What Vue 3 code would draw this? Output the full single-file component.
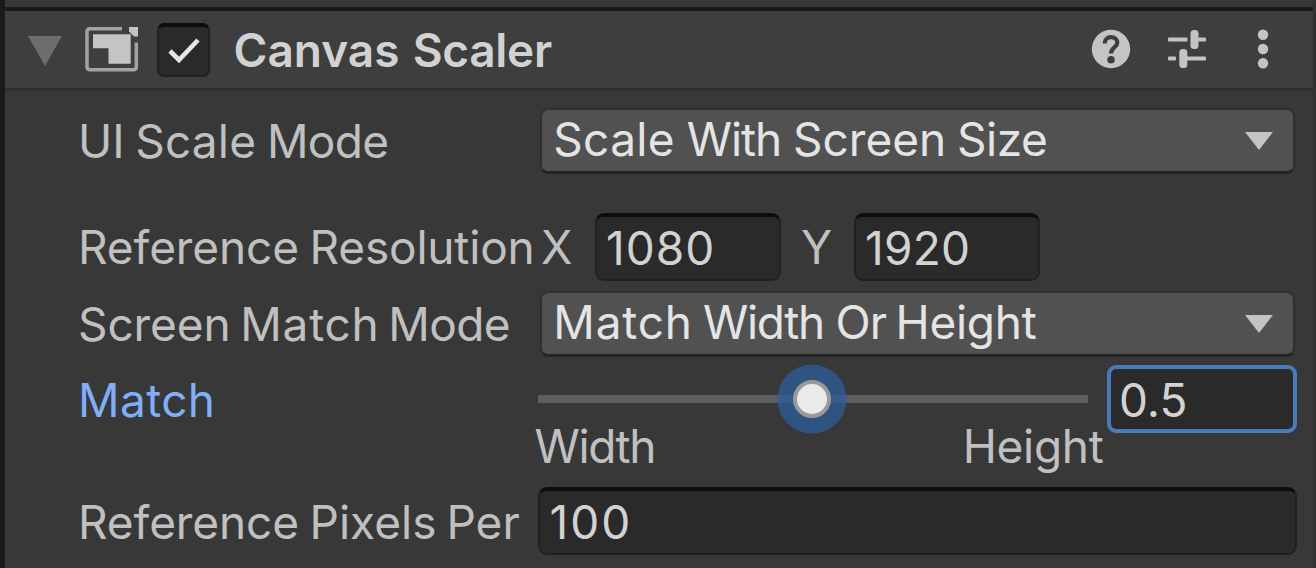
<script setup>
import { ref, h } from 'vue'

// Each word is [text, tracking, space before it], in pixels.
const Words = ({ words }) =>
  h('span', { class: 'words' }, words.map(([text, tracking = 0, gap = 0], i) =>
    h('span', { style: { letterSpacing: tracking + 'px', marginLeft: gap + 'px' } }, i ? ' ' + text : text)))
Words.props = ['words']

const text = {
  title: [['Canvas', 0], ['Scaler', -0.3, 13.2]],
  scaleMode: [['UI', 0], ['Scale', 0.2, 10.6], ['Mode', -0.7, 10.8]],
  scaleValue: [['Scale', 0.3], ['With', -1.1, 11.9], ['Screen', 0, 12], ['Size', -0.5, 10.8]],
  resolution: [['Reference', -0.1], ['Resolution', -0.2, 10.6]],
  matchMode: [['Screen', -0.1], ['Match', 0.7, 9.8], ['Mode', -0.6, 9]],
  matchValue: [['Match', 0.8], ['Width', -1.3, 10.2], ['Or', -1, 11.6], ['Height', -0.3, 9.5]],
  match: [['Match', 0.4]],
  low: [['Width', -1.4]],
  high: [['Height', -0.3]],
  pixels: [['Reference', -0.1], ['Pixels', 0, 10.6], ['Per', 0, 10]],
}

const enabled = ref(true)
const resolution = ref([
  { axis: 'X', value: '1080', tracking: 1 },
  { axis: 'Y', value: '1920', tracking: 0.2 },
])
const match = ref(0.5)
</script>

<template>
  <main class="panel">
    <div class="strip"></div>
    <header class="head">
      <svg class="fold" width="36" height="32" viewBox="0 0 36 32"><path d="M1 1H35L18 31Z" fill="#6d6d6d" /></svg>
      <svg class="comp" width="56" height="50" viewBox="0 0 56 50">
        <path d="M38 4.700H6Q3 4.700 3 7.700V42.700Q3 45.700 6 45.700H49.300Q52.300 45.700 52.300 42.700V18.500" fill="none" stroke="#a3a3a3" stroke-width="3.500" />
        <path d="M9 10.300H46.700V39.700H24.500V24.300H9Z" fill="#c4c4c4" />
        <path d="M45 3H54V12.500H50L45 7.500Z" fill="#c4c4c4" />
      </svg>
      <div class="check">
        <svg v-if="enabled" width="36" height="30" viewBox="0 0 36 30"><path d="M4 15L13 24L32 4" fill="none" stroke="#e6e6e6" stroke-width="4.600" /></svg>
      </div>
      <h1 class="title"><Words :words="text.title" /></h1>
      <div class="tools">
        <svg width="40" height="40" viewBox="0 0 40 40">
          <circle cx="20" cy="20" r="19.200" fill="#c4c4c4" />
          <path d="M13.700 14.500C13.700 10.700 16.300 8.200 20 8.200C23.800 8.200 26.300 10.500 26.300 13.700C26.300 18.200 20 18.500 20 24.500" fill="none" stroke="#3e3e3e" stroke-width="4.200" />
          <circle cx="20" cy="30.800" r="3.800" fill="#3e3e3e" />
        </svg>
        <svg width="40" height="40" viewBox="0 0 40 40" fill="#c4c4c4">
          <rect x="1" y="8.500" width="19.500" height="4" rx="1" />
          <rect x="31" y="8.500" width="8" height="4" rx="1" />
          <rect x="23.500" y="1" width="8" height="19" rx="3.500" />
          <rect x="1" y="27.500" width="8" height="4" rx="1" />
          <rect x="19" y="27.500" width="20" height="4" rx="1" />
          <rect x="12.300" y="20" width="8" height="19" rx="3.500" />
        </svg>
        <svg class="dots" width="12" height="40" viewBox="0 0 12 40" fill="#c4c4c4">
          <circle cx="6" cy="5.800" r="5.200" /><circle cx="6" cy="20" r="5.200" /><circle cx="6" cy="34.200" r="5.200" />
        </svg>
      </div>
    </header>

    <section class="body">
      <div class="row mode">
        <Words class="label" :words="text.scaleMode" />
        <div class="select"><Words :words="text.scaleValue" /><svg class="caret" width="28" height="18" viewBox="0 0 28 18"><path d="M0 0H28L14 18Z" fill="#c4c4c4" /></svg></div>
      </div>
      <div class="row res">
        <Words class="label" :words="text.resolution" />
        <div v-for="r in resolution" :key="r.axis" class="axis">
          <span class="axis-name">{{ r.axis }}</span>
          <div class="field"><Words :words="[[r.value, r.tracking]]" /></div>
        </div>
      </div>
      <div class="row match-mode">
        <Words class="label" :words="text.matchMode" />
        <div class="select"><Words :words="text.matchValue" /><svg class="caret" width="28" height="18" viewBox="0 0 28 18"><path d="M0 0H28L14 18Z" fill="#c4c4c4" /></svg></div>
      </div>
      <div class="row match">
        <Words class="label active" :words="text.match" />
        <div class="slider"><div class="track"></div><div class="thumb" :style="{ left: match * 100 + '%' }"></div></div>
        <div class="field focus">{{ match }}</div>
      </div>
      <div class="ends"><Words :words="text.low" /><Words :words="text.high" /></div>
      <div class="row ppu">
        <Words class="label short" :words="text.pixels" />
        <div class="field wide"><Words :words="[['100', 2]]" /></div>
      </div>
    </section>
  </main>
</template>

<style>
body { margin: 0; background: #383838; overflow: hidden; }
.words { display: flex; }
</style>

<style scoped>
* { box-sizing: border-box; }
.panel {
  width: 1316px; height: 568px; overflow: hidden;
  background: #383838; color: #c0c0c0;
  border-left: 5px solid #1a1a1a; border-right: 3px solid #313131;
  font: 400 46px/56px Inter, sans-serif; white-space: nowrap;
}
.strip { height: 11px; border-bottom: 4px solid #1a1a1a; }
.head { height: 80px; display: flex; align-items: center; background: #3e3e3e; border-bottom: 3px solid #303030; padding-left: 22px; }
.fold { margin-top: 3px; }
.comp { margin-left: 21px; margin-top: -1px; }
.check {
  width: 53px; height: 54px; margin-left: 17px; display: flex; align-items: center; justify-content: center;
  background: #2a2a2a; border: 2px solid #212121; border-top: 4px solid #0d0d0d; border-radius: 7px;
}
.title { margin: 1px 0 0 23.500px; font-size: 46px; font-weight: 600; color: #d2d2d2; }
.tools { display: flex; gap: 36px; margin: -1px 44px 0 auto; }
.dots { margin-left: 14px; }
.body { padding: 17px 0 0 73px; }
.row { display: flex; align-items: center; }
.label { width: 462px; flex: none; }
.mode { height: 66px; margin-bottom: 39px; }
.res { height: 68px; margin-bottom: 10px; }
.match-mode { height: 66px; margin-bottom: 8px; }
.match, .ppu { height: 68px; }
.select {
  width: 755px; height: 66px; display: flex; align-items: center; justify-content: space-between;
  padding: 0 20px 3px 11.300px; color: #e4e4e4; background: #515151;
  border: 2px solid #303030; border-bottom: 3px solid #242424; border-radius: 8px;
}
.caret { margin-top: 4px; }
.field {
  width: 186px; height: 68px; line-height: 63px; padding-left: 9px; color: #d2d2d2; background: #2a2a2a;
  border: 2px solid #212121; border-top: 4px solid #0d0d0d; border-radius: 9px;
}
.axis { display: flex; align-items: center; }
.axis-name { width: 55px; padding-left: 1px; }
.axis + .axis { margin-left: 19px; }
.axis + .axis .axis-name { width: 54px; }
.label.active { color: #81adf9; width: 460px; padding-top: 2px; }
.slider { width: 550px; height: 68px; position: relative; display: flex; align-items: center; }
.track { width: 100%; height: 8px; background: #5e5e5e; }
.thumb {
  position: absolute; top: 15px; width: 38px; height: 38px; margin-left: -20px; border-radius: 50%;
  background: #eaeaea; border: 4px solid #999; box-shadow: 0 0 0 15.500px rgba(44, 93, 155, 0.75);
}
.focus { width: 190px; margin-left: 19px; padding-left: 8px; border: 4px solid #4a7ab8; line-height: 62px; }
.ends { height: 54px; width: 569px; margin-left: 456.500px; display: flex; justify-content: space-between; line-height: 26px; }
.label.short { width: 460px; padding-top: 2px; }
.wide { width: 759px; padding-left: 9.500px; }
</style>
